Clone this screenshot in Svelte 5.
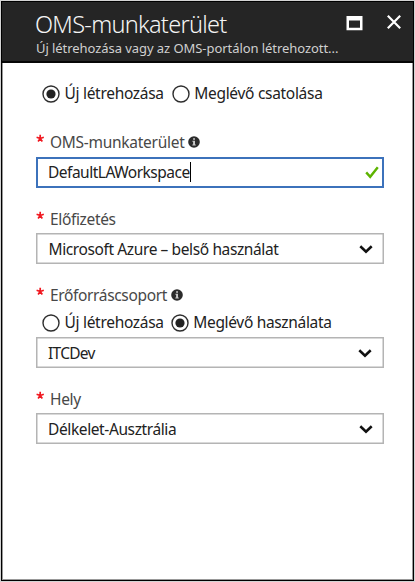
<script>
  const fields = {
    workspace: 'DefaultLAWorkspace',
    subscription: 'Microsoft Azure – belső használat',
    group: 'ITCDev',
    location: 'Délkelet-Ausztrália'
  };
</script>

{#snippet star()}
  <svg class="star" width="9" height="9" viewBox="0 0 9 9">
    <path d="M4.2 4.5V.7M4.2 4.5L.6 3.3M4.2 4.5L7.8 3.3M4.2 4.5L2.1 7.6M4.2 4.5L6.3 7.6" stroke="#f01820" stroke-width="1.7" fill="none" />
  </svg>
{/snippet}

{#snippet info()}
  <svg class="info" width="12" height="12" viewBox="0 0 12 12">
    <circle cx="6" cy="6" r="5.8" fill="#2b2b2b" />
    <path d="M5.1 2.2h1.9v1.6H5.1zM4.4 4.8H7v3.7h.8v1H4.3v-1h.8V5.8h-.7z" fill="#c9c9c9" />
  </svg>
{/snippet}

{#snippet radio(on)}
  <svg class="radio" width="18" height="18" viewBox="0 0 18 18">
    <circle cx="9" cy="9" r="8" fill="#fff" stroke="#2e2e2e" stroke-width="1.4" />
    {#if on}<circle cx="9" cy="9" r="4.6" fill="#222" />{/if}
  </svg>
{/snippet}

{#snippet chevron()}
  <svg class="chevron" width="14" height="9" viewBox="0 0 14 9">
    <path d="M1.3 1.3L7 6.6L12.7 1.3" fill="none" stroke="#111" stroke-width="2.6" />
  </svg>
{/snippet}

<div class="page">
  <div class="blade">
    <header>
      <div class="heading">
        <h1>OMS-munkaterület</h1>
        <p>Új létrehozása vagy az OMS-portálon létrehozott...</p>
      </div>
      <div class="tools">
        <svg width="17" height="16" viewBox="0 0 17 16">
          <path fill-rule="evenodd" d="M.5 1h16v14.3H.5zM3 5.6v7.2h11V5.6z" fill="#fff" />
        </svg>
        <svg width="14" height="14" viewBox="0 0 14 14">
          <path d="M.8 .8L13.2 13.2M13.2 .8L.8 13.2" stroke="#fff" stroke-width="2.2" />
        </svg>
      </div>
    </header>
    <main>
      <div class="options first">
        {@render radio(true)}<span class="a">Új létrehozása</span>
        {@render radio(false)}<span class="b">Meglévő csatolása</span>
      </div>

      <div class="label workspace">{@render star()}<span>OMS-munkaterület</span>{@render info()}</div>
      <div class="box active">
        <span class="v1">{fields.workspace}</span><i class="caret"></i>
        <svg class="check" width="14" height="13" viewBox="0 0 14 13">
          <path d="M1.2 6.4L5.2 10.8L12.8 1.2" fill="none" stroke="#5db300" stroke-width="2.4" />
        </svg>
      </div>

      <div class="label subscription">{@render star()}<span>Előfizetés</span></div>
      <div class="box"><span class="v2">{fields.subscription}</span>{@render chevron()}</div>

      <div class="label group">{@render star()}<span>Erőforráscsoport</span>{@render info()}</div>
      <div class="options second">
        {@render radio(false)}<span class="a">Új létrehozása</span>
        {@render radio(true)}<span class="c">Meglévő használata</span>
      </div>
      <div class="box dev"><span class="v3">{fields.group}</span>{@render chevron()}</div>

      <div class="label location">{@render star()}<span>Hely</span></div>
      <div class="box"><span class="v4">{fields.location}</span>{@render chevron()}</div>
    </main>
  </div>
</div>

<style>
  :global(body) { margin: 0; background: #fff; }
  .page {
    box-sizing: border-box;
    width: 415px;
    height: 582px;
    padding: 1px;
    background: #d4d4d4;
    font-family: "Noto Sans", "Open Sans", sans-serif;
    font-size: 15.5px;
    color: #222;
    white-space: nowrap;
  }
  .blade {
    box-sizing: border-box;
    height: 580px;
    border: 1px solid #000;
    background: #fff;
    box-shadow: inset 0 0 0 1px #999;
  }
  header {
    display: flex;
    justify-content: space-between;
    box-sizing: border-box;
    height: 61px;
    padding: 9px 12px 0 33px;
    background: #252525;
    border-bottom: 2px solid #060606;
    color: #fff;
  }
  h1, p { margin: 0; }
  h1 { font-size: 23.5px; line-height: 27px; font-weight: 300; letter-spacing: -.7px; color: #f4f4f4; }
  p { padding: 1px 0 0 1px; font-size: 13px; line-height: 18px; letter-spacing: -.06px; color: #d0d0d0; }
  .tools { display: flex; align-items: flex-start; gap: 24px; padding-top: 4px; }
  main { display: flex; flex-direction: column; padding: 21px 28px 0 34px; }
  .options { display: flex; align-items: center; height: 20px; padding-left: 6px; }
  .options span { margin-left: 4.5px; padding-bottom: 2px; line-height: 20px; letter-spacing: -.3px; }
  .options .a { margin-right: 8px; }
  .second .a { margin-right: 7px; }
  .options .c { letter-spacing: -.33px; }
  .label { display: flex; align-items: center; height: 20px; line-height: 20px; color: #484848; letter-spacing: -.35px; }
  .label span { margin: 0 4px 0 5px; }
  .workspace { letter-spacing: -.28px; }
  .star { padding-bottom: 7px; }
  .box {
    display: flex;
    align-items: center;
    box-sizing: border-box;
    width: 348px;
    height: 31px;
    padding: 0 10px;
    border: 1.5px solid #b4b4b4;
    box-shadow: inset 0 0 0 .5px #b4b4b4;
    letter-spacing: -.39px;
  }
  .box span { padding-left: 1px; }
  .box .v2 { padding-left: 1.5px; }
  .box .v3 { letter-spacing: -.7px; }
  .box.active { border: 2px solid #3c72bb; box-shadow: none; padding-right: 3px; letter-spacing: -.5px; }
  .active span { padding: 0 0 2px; }
  .dev { padding-right: 11px; }
  .caret { width: 1px; height: 20px; margin-bottom: 2px; background: #000; }
  .check, .chevron { margin-left: auto; }
  .chevron { padding-top: 1px; }
  .workspace { margin: 28px 0 5px; }
  .subscription { margin: 21px 0 4px; }
  .group { margin: 21px 0 8px; }
  .second { margin-bottom: 4px; }
  .location { margin: 21px 0 4px; }
</style>
